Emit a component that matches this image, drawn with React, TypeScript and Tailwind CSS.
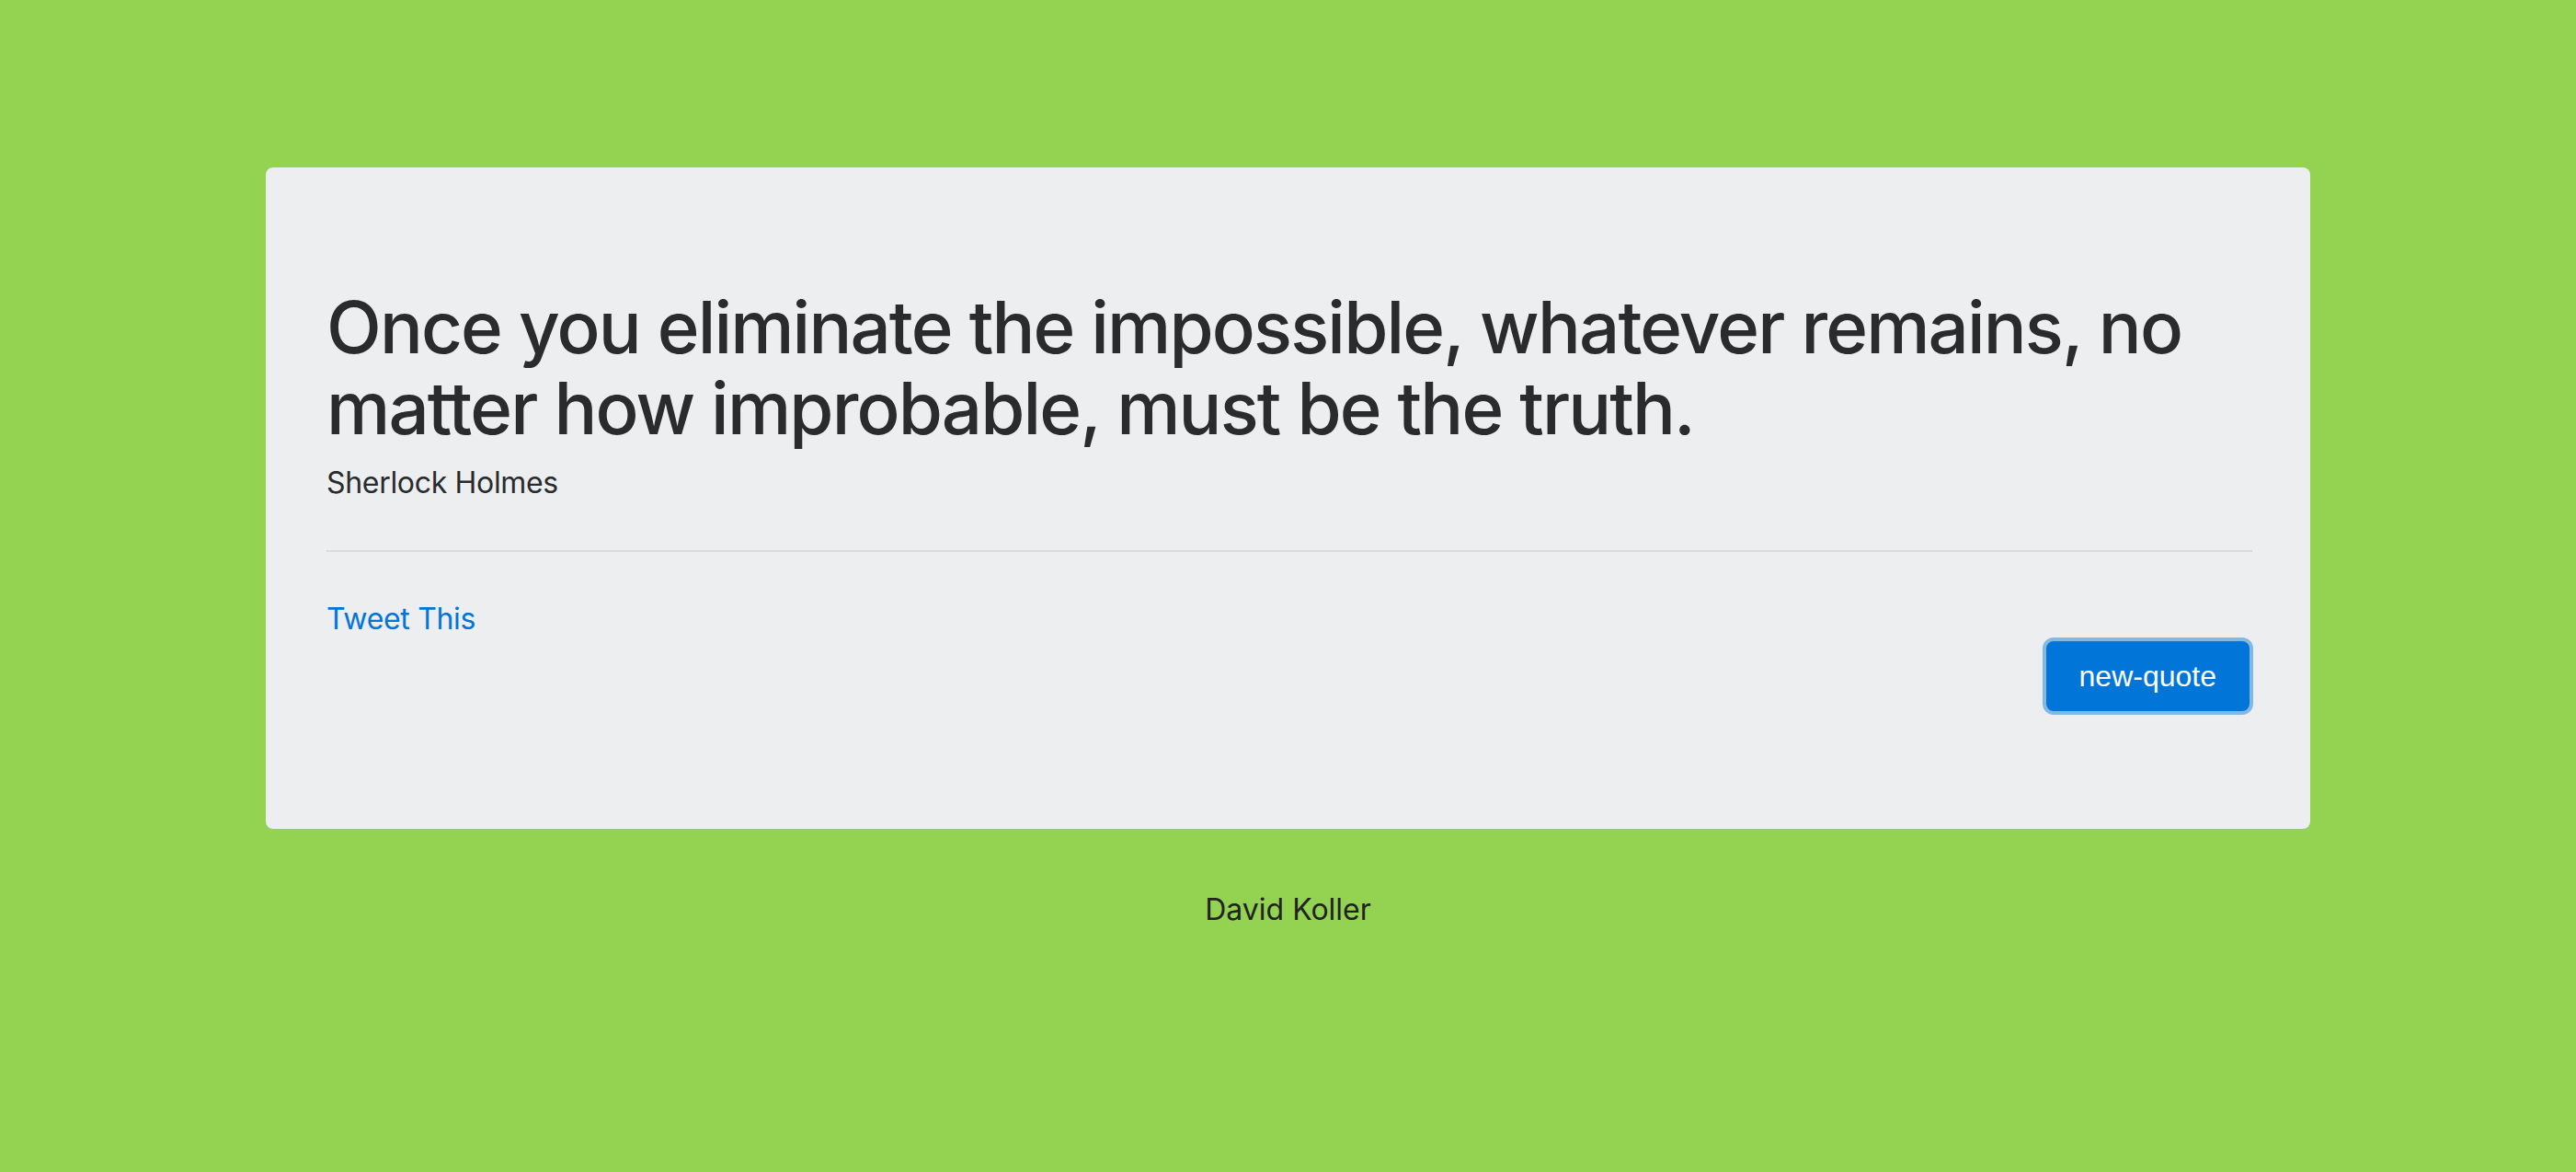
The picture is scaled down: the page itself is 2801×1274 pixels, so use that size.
export default function App() {
  return (
    <div className="min-h-[1274px] w-full bg-[#94d352] pt-[182px] font-['Inter','Liberation_Sans',sans-serif] text-[#292b2c]">
      <div className="mx-auto w-[2223px] rounded-[8px] bg-[#eceeef] pb-[128px] pl-[66px] pr-[63px] pt-[130px]">
        <h1 className="text-[78px] font-medium leading-[88px] tracking-[-0.024em]">
          Once you eliminate the impossible, whatever remains, no matter how improbable, must be the truth.
        </h1>
        <p className="mt-[13px] text-[32px] leading-[48px] tracking-[-0.01em]">Sherlock Holmes</p>
        <hr className="mb-[49px] mt-[49px] border-t-2 border-[#d9dadb]" />
        <a href="#" className="block text-[32px] leading-[48px] tracking-[-0.01em] text-[#0275d8]">
          Tweet This
        </a>
        <div className="flex justify-end pr-[3px]">
          <button className="h-[76px] rounded-[8px] border-2 border-[#0275d8] bg-[#0275d8] px-[34px] font-['Liberation_Sans',Arial,sans-serif] text-[32px] leading-[40px] text-white shadow-[0_0_0_4px_rgba(2,117,216,0.45)]">
            new-quote
          </button>
        </div>
      </div>
      <p className="mt-[64px] text-center text-[32px] leading-[48px] text-[#222]">David Koller</p>
    </div>
  );
}
